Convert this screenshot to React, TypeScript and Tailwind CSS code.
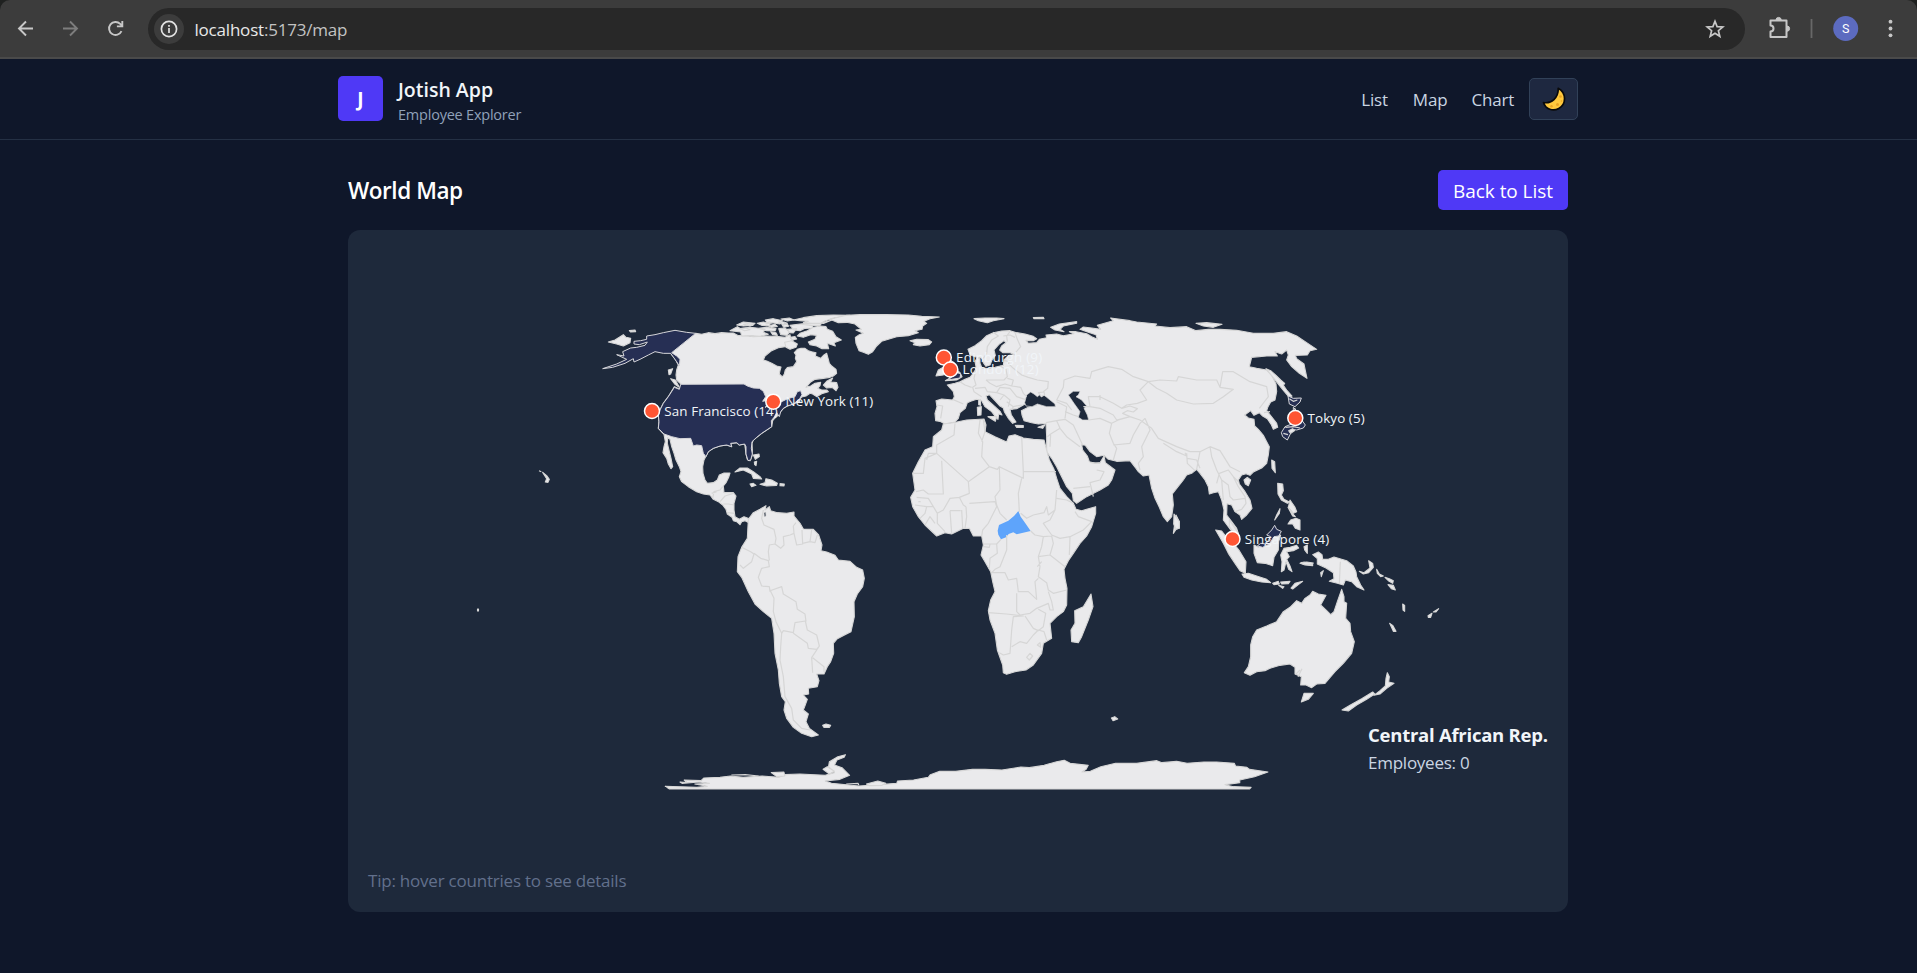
import React from "react";

type Pin = { name: string; x: number; y: number; width: number };

const pins: Pin[] = [
  { name: "San Francisco (14)", x: 652, y: 411, width: 113.5 },
  { name: "New York (11)", x: 773.3, y: 401.7, width: 87.5 },
  { name: "Edinburgh (9)", x: 943.8, y: 357.5, width: 86 },
  { name: "London (12)", x: 950.3, y: 369.5, width: 76 },
  { name: "Tokyo (5)", x: 1295.3, y: 418, width: 57 },
  { name: "Singapore (4)", x: 1232.5, y: 539, width: 84.5 },
];

/** A group of outlines that share an origin, drawn at a third of their unit size. */
function Region({ x, y, sx = 3, children }: { x: number; y: number; sx?: number; children: React.ReactNode }) {
  return <g transform={`translate(${x} ${y}) scale(${1 / sx} ${1 / 3})`}>{children}</g>;
}

const Land = ({ d }: { d: string }) => (
  <path d={d} fill="#eaeaec" stroke="#d6d6d6" strokeWidth="1.1" vectorEffect="non-scaling-stroke" strokeLinejoin="round" />
);
const Border = ({ d }: { d: string }) => (
  <path d={d} fill="none" stroke="#d6d6d6" strokeWidth="1.2" vectorEffect="non-scaling-stroke" strokeLinejoin="round" />
);
const Staffed = ({ d }: { d: string }) => (
  <path d={d} fill="#262f54" stroke="#d6d6da" strokeWidth="1" vectorEffect="non-scaling-stroke" strokeLinejoin="round" />
);
const Water = ({ d }: { d: string }) => <path d={d} fill="#1e293b" stroke="#d6d6d6" strokeWidth="0.7" vectorEffect="non-scaling-stroke" />;

function NorthAmerica() {
  return (
    <>
      <Region x={520} y={300}>
        <Land d="M527 100 545 103 565 98 585 101 605 98 625 99 640 99 655 107 680 107 700 110 740 108 775 110 795 112 810 104 812 115 820 120 802 128 806 134 795 140 775 143 755 152 745 160 735 168 730 180 740 183 755 190 770 198 783 201 780 212 778 222 787 231 793 222 796 210 802 203 820 200 830 185 826 175 828 165 823 158 832 148 843 145 855 145 865 152 875 155 888 158 886 168 902 175 912 165 920 160 925 178 928 190 935 198 948 208 950 220 940 228 930 232 910 235 885 238 872 246 858 262 872 258 885 250 902 247 900 257 893 265 905 270 920 270 925 275 905 281 890 290 878 282 870 280 858 288 845 291 838 298 840 304 820 312 802 318 790 325 782 335 775 345 765 354 758 362 755 380 740 390 725 400 710 412 700 420 696 430 697 450 696 468 690 482 682 478 678 462 676 445 674 432 658 435 650 428 632 430 635 440 620 435 600 438 580 445 565 455 558 468 552 480 548 500 549 520 555 540 562 550 580 548 592 540 598 525 612 519 630 519 626 532 618 548 610 558 612 578 640 578 648 588 642 610 642 630 645 650 658 658 672 650 688 656 690 670 675 662 665 665 660 674 650 665 640 662 636 652 622 642 618 628 608 615 595 605 580 598 570 585 550 582 530 575 505 560 485 545 478 530 483 515 478 500 468 480 462 460 455 440 450 418 443 413 442 430 448 455 453 475 458 500 453 506 445 492 440 475 429 458 432 440 436 425 432 403 415 385 417 365 415 345 420 330 430 310 445 290 463 260 480 268 483 252 470 240 468 225 470 210 475 195 470 185 462 172 452 160Z" />
        <Border d="M578 595 582 575 600 570 608 560M600 605 615 588 640 580M610 612 625 612 642 615M622 638 645 640M575 580 590 575" />
        <Staffed d="M482 253 672 252 682 258 700 264 718 265 730 274 737 290 728 304 738 302 745 315 735 322 760 310 785 305 803 296 825 290 832 275 842 272 846 284 838 298 820 312 802 318 790 325 782 335 778 350 770 338 762 352 754 362 755 380 740 390 725 400 710 412 696 425 694 445 697 462 692 480 684 482 678 462 678 440 674 432 658 435 650 428 632 430 635 440 620 435 600 438 580 445 565 455 558 470 550 460 545 437 530 435 520 438 512 415 480 416 455 410 432 402 415 385 417 365 415 345 420 330 430 310 445 290 463 262 478 268Z" />
        <Staffed d="M527 100 500 97 465 91 430 98 405 104 380 108 380 118 362 122 342 124 342 132 358 134 382 126 375 136 350 142 332 144 308 155 312 168 290 164 320 178 290 192 248 206 278 202 315 190 340 176 342 186 360 178 385 165 405 155 430 160 452 160 462 174 470 185 478 198 480 178 470 168 455 158Z" />
        <Land d="M265 126 285 120 310 104 318 112 332 115 330 128 310 138 290 132ZM328 92 345 90 347 95 332 96ZM445 210 458 206 452 222 447 224ZM452 236 466 240 478 262 464 252Z" />
        <Land d="M57 512 64 515M68 517 80 527 88 538 84 547 76 546 80 536Z" />
        <Land d="M645 516 660 504 682 504 700 515 720 530 725 537 700 535 695 522 670 510ZM690 552 700 550 708 556 695 560ZM720 553 735 548 738 536 755 540 772 550 770 556 740 558ZM780 551 793 552 792 558 780 557ZM700 465 717 462 718 470 706 478ZM703 486 710 484 708 497 704 494Z" />
      </Region>
      <Region x={700} y={300}>
        <Land d="M90 92 112 80 122 86 150 82 170 84 195 88 190 97 205 103 180 109 150 107 125 108 122 96ZM110 75 130 66 165 70 158 76 130 78ZM172 70 190 66 210 72 208 78 185 76ZM175 85 200 82 228 86 225 93 200 92ZM196 60 220 56 248 62 240 72 215 68 200 66ZM236 86 255 84 268 96 262 106 242 104ZM262 88 290 86 280 99 268 98ZM270 76 300 72 335 76 340 84 315 85 300 92 282 90ZM254 127 275 122 292 132 288 142 270 148 258 142ZM300 72 340 68 372 70 396 60 366 68 360 76 330 76Z" />
        <Land d="M130 73 145 71 160 74 150 78ZM205 77 225 73 232 79 214 82ZM247 76 262 72 266 79 252 82ZM212 95 228 98 232 106 218 104ZM243 57 268 54 282 60 262 63ZM198 72 208 66 216 69ZM270 112 285 110 290 117 278 120ZM120 86 138 84 150 89 134 92ZM236 66 252 66 262 70 246 73Z" />
        <Land d="M280 60 310 53 350 47 400 45 450 46 400 54 375 63 362 70 335 70 310 68 325 64 300 62Z" />
        <Land d="M322 92 340 82 362 78 378 80 382 88 398 94 408 110 424 120 402 128 406 138 382 130 386 146 366 146 350 138 330 134 325 126 345 118 350 106 332 104 310 112 292 108 300 100Z" />
        <Land d="M390 58 420 50 440 46 480 44 560 44 625 45 665 49 718 51 690 56 672 64 680 70 668 78 666 88 645 92 655 98 625 107 590 110 565 118 545 124 530 138 518 155 505 163 490 157 477 152 468 130 466 112 478 104 490 100 468 90 484 88 465 72 440 67 415 68Z" />
        <Land d="M370 255 380 244 398 234 392 246 410 248 414 262 408 272 396 262 380 264ZM630 122 650 118 685 119 695 126 688 134 660 138 640 134 645 128Z" />
      </Region>
    </>
  );
}

function SouthAmerica() {
  return (
    <Region x={720} y={490}>
      <Land d="M85 88 100 68 120 58 138 47 135 60 148 50 152 62 172 68 200 70 222 66 222 78 240 100 250 117 280 118 296 135 306 165 303 182 320 186 345 196 355 210 390 214 410 232 428 240 433 265 428 290 412 312 402 335 403 380 393 425 375 434 352 446 340 460 341 490 332 515 322 530 312 552 290 552 297 572 292 590 265 595 266 612 250 615 262 628 254 650 250 660 265 672 258 695 268 715 295 735 275 740 245 730 220 712 200 685 192 660 196 635 185 620 178 580 175 540 165 490 162 430 155 385 130 365 105 342 85 305 65 262 52 245 54 200 65 172 82 145Z" />
      <Land d="M308 706 318 702 332 706 328 712 312 712Z" />
      <Border d="M130 60 125 85 132 105 162 118 168 145 165 162 148 165 145 185 148 212M65 172 92 185 102 192 95 215 70 235 60 225M102 190 122 205 145 212 148 230 125 235 115 262 125 288 148 290 150 305M165 162 182 175 192 165 190 140 210 135 222 130 220 108 228 98M222 130 230 165 248 162 246 120M248 160 270 155 275 120M270 155 285 158 292 135M148 303 185 290 190 312 228 335 232 358 255 372 258 395 M150 300 162 325 160 365 168 395 185 430M185 430 190 422 220 428 225 398 256 393 262 420 290 435 298 468 290 478 265 475 262 460 220 430M298 468 275 503 278 548M278 503 312 530 312 545M185 430 182 470 180 510 190 560 195 620 215 655 220 690 245 715 270 720" />
      <Water d="M132 68 137 66 138 78 133 80Z" />
    </Region>
  );
}

function Eurasia() {
  return (
    <Region x={900} y={300}>
      <Land d="M108 302 125 297 158 300 163 290 160 275 150 264 142 255 165 250 180 245 195 238 210 232 218 222 226 210 228 200 225 185 232 172 240 178 240 190 246 204 262 206 285 202 310 196 312 180 325 167 345 164 330 158 308 158 299 150 305 138 318 128 312 122 298 132 282 150 286 166 276 180 270 195 258 199 250 188 246 175 230 172 210 164 204 148 225 137 245 122 260 107 280 98 305 93 330 92 350 98 375 102 400 109 410 116 400 122 378 121 385 130 410 128 418 118 440 113 438 105 470 102 490 107 522 101 508 95 528 95 560 101 575 110 592 118 588 104 565 97 540 88 550 81 575 84 602 88 592 76 640 62 632 54 690 62 710 66 770 72 765 78 810 83 860 80 888 92 925 88 960 88 1010 91 1060 100 1120 100 1160 95 1190 108 1220 128 1250 148 1230 152 1222 165 1186 166 1190 176 1212 192 1216 212 1221 235 1198 220 1175 200 1160 180 1165 165 1160 150 1145 162 1125 155 1132 168 1100 168 1055 172 1048 200 1070 205 1100 210 1115 226 1128 252 1130 275 1125 300 1112 306 1104 320 1100 332 1116 352 1130 370 1133 382 1120 388 1114 374 1102 356 1088 348 1078 338 1062 346 1052 332 1034 345 1045 354 1062 358 1064 378 1075 388 1090 406 1100 425 1108 440 1105 465 1100 490 1085 504 1060 516 1050 526 1038 521 1025 525 1015 540 1018 552 1035 575 1050 600 1056 625 1040 645 1025 658 1020 645 1005 635 995 615 981 611 980 645 995 665 1010 685 1017 707 1000 700 985 680 970 660 972 630 965 600 955 575 940 578 928 582 925 560 915 540 900 520 890 508 875 520 860 525 850 540 830 565 817 582 820 615 815 650 802 665 790 650 778 622 765 595 755 565 747 525 730 528 715 515 708 505 690 482 650 484 625 478 612 466 590 470 570 455 556 436 545 434 548 450 562 468 568 485 585 490 600 488 612 468 616 488 645 510 635 540 625 555 600 570 560 590 530 610 520 602 517 580 500 560 485 530 470 500 455 475 440 455 440 410 438 370 415 372 395 368 372 362 366 345 364 332 385 322 410 316 375 312 350 326 330 328 334 345 348 366 338 370 325 355 313 335 310 324 300 318 285 302 268 284 258 288 262 300 285 320 300 334 306 345 296 342 294 358 288 352 275 335 255 320 245 302 230 298 212 304 202 308 196 325 180 338 175 355 165 366 135 372 120 364 107 362 105 340 111 320Z" />
      <Water d="M380 285 392 276 402 282 412 290 425 280 440 292 465 312 466 320 440 320 412 312 396 320 378 318 374 308Z" />
      <Land d="M415 278 432 276 434 284 424 290Z" />
      <Water d="M505 285 520 274 540 274 535 285 528 290 545 300 560 318 552 325 562 345 566 360 548 360 535 352 540 335 522 310Z" />
      <Land d="M232 322 244 320 243 345 233 346ZM236 302 241 298 242 316 236 314ZM264 350 290 350 286 364ZM346 376 370 377 370 382 350 382ZM414 382 435 374 428 385ZM108 228 115 210 130 202 138 212 130 225ZM135 188 150 180 162 188 165 205 180 218 186 230 170 240 136 242 150 234 140 220 148 205Z" />
      <Staffed d="M142 240 155 232 148 220 165 215 182 222 180 234Z" />
      <Land d="M222 56 255 54 290 54 312 56 280 62 262 68 235 62ZM400 53 430 52 432 56 402 56ZM452 82 478 72 530 65 530 70 490 78 480 88 492 95 465 90ZM820 700 828 645 838 665 838 685 828 688ZM888 70 920 68 966 73 940 82 910 78Z" />
      <Border d="M280 97 295 108 275 120 262 140 260 160 250 175M330 95 320 108 322 125M345 98 352 118 362 140 345 160M310 108 330 105 345 112M326 168 325 190 340 205 365 225 385 232 412 240 445 245 443 265 430 275M312 182 330 185M300 198 318 208 322 230 312 240 290 240 258 240M228 208 222 235 228 255 218 262 222 275 245 290M258 240 270 250 290 260 315 252 335 258 340 240 322 235M225 265 255 262 262 275 290 278 300 262M290 278 312 285 330 300 325 320M335 258 362 262 370 280 380 290M300 262 330 265 350 290 375 298M312 285 300 300M320 305 340 320 365 315M340 320 335 330M110 315 128 318 122 355M158 298 190 312M180 245 195 255 215 262" />
      <Border d="M490 262 492 240 525 228 570 235 575 215 625 200 665 208 700 230 745 245 720 270 740 300 712 310 680 315 665 325 640 310 600 290 565 290 570 320 550 320M600 300 600 285M570 320 600 325 640 345 650 360 690 350 720 360M745 245 770 265 800 280 830 300 880 312 940 310 970 290 1000 268 960 262 950 240 890 240 835 230 830 243 780 240 745 245M960 262 968 215 1000 215 1050 245 1100 260 1105 290 1088 312 1078 325M1092 338 1110 335M490 262 470 300 500 310 515 330M470 305 500 320 495 355M438 368 470 362 495 358 520 375 548 435M470 362 480 385 452 402 442 410M480 385 500 410 540 440M452 402 450 440M495 335 520 345 535 350M566 360 600 355 635 370 655 360 690 350M635 370 628 400 640 430 650 445 640 480M640 435 690 430 700 405 720 370 735 355M735 355 750 390 740 410 725 440 730 470 715 490 720 510M720 360 755 385 775 415 830 440 870 455 900 455 930 440 960 452 990 500 1020 515M790 430 830 455 860 468 855 458M860 460 862 490 885 512M862 475 890 480 900 505M900 455 895 480 890 508M930 440 935 470 950 510 965 540 970 600M950 550 958 520 985 510 1000 530 1015 560 1035 590 1038 610 1025 628 1005 635M965 540 985 555 990 590 1000 600 1035 595M1000 530 1015 545M580 590 570 548 600 540 612 515 590 510M520 565 570 560M572 488 600 490M665 325 690 318 712 326 700 336 682 332 668 340 690 350" />
      <Land d="M1115 480 1124 485 1126 518 1116 505ZM1032 540 1042 532 1052 540 1045 557 1036 552Z" />
      <Land d="M1098 206 1112 212 1128 226 1142 240 1154 250 1150 256 1160 270 1176 288 1168 292 1154 276 1138 256 1122 236Z" />
      <Staffed d="M1164 288 1180 295 1204 294 1200 306 1185 320 1168 312ZM1180 322 1192 335 1198 350 1216 375 1210 384 1190 390 1175 388 1168 395 1172 400 1162 420 1148 410 1144 398 1155 380 1175 372 1180 350Z" />
      <Land d="M1166 392 1178 386 1184 392 1172 400Z" />
      <Border d="M1168 296 1180 304 1192 300M1156 382 1180 380 1200 384M1150 400 1164 404M1184 324 1190 348" />
    </Region>
  );
}

function Africa() {
  return (
    <Region x={900} y={410}>
      <Land d="M130 42 160 38 200 30 252 27 258 45 255 65 285 80 320 96 327 78 345 74 370 84 400 88 432 90 440 120 448 150 462 178 470 205 480 235 500 260 520 280 528 298 545 302 587 290 587 310 575 350 560 378 540 400 520 430 505 452 492 478 495 505 501 535 500 585 490 605 470 620 450 640 455 685 430 700 425 730 400 765 378 780 345 785 320 793 310 788 308 765 292 720 285 670 270 630 265 602 272 570 285 545 278 515 272 485 255 455 243 435 250 405 245 378 220 378 208 355 190 355 155 372 135 368 110 378 75 345 55 320 38 290 32 262 45 240 38 190 55 155 75 120 98 110 100 80 125 60Z" />
      <Land d="M573 552 579 590 565 630 545 680 535 698 515 695 513 660 525 640 524 602 550 590Z" />
      <path d="M355 303 362 320 375 338 392 363 350 373 340 367 326 372 318 382 303 388 295 374 293 362 297 345 325 332 342 318Z" fill="#5ea4fb" />
      <Border d="M165 40 162 75 110 105 110 130 205 215 268 170 245 140 248 95 235 70 240 30M250 30 255 65 245 95M268 170 292 178 298 170 370 205 370 185 365 80M370 185 468 185M298 170 300 240 285 260 290 285 300 310 320 330M365 205 355 250 358 305M110 130 75 145 70 190 40 190M110 130 85 130 80 150M125 152 130 252 85 252 70 240 48 245M205 215 208 250 178 262 150 265 130 300 112 310M178 262 190 285 198 290M208 280 285 275 290 290 265 340 248 360 245 378M198 290 200 320 195 355M185 300 188 355M150 302 182 302M150 302 155 370M50 262 85 265 100 290 112 310 112 340 135 365M55 275 62 275M45 285 80 290 75 310 60 325M80 290 100 290M75 345 90 320 105 340M362 310 380 325 400 315 432 308 440 290 445 315 465 300 470 240M470 265 500 270 520 280M465 300 450 330 430 340 455 375 480 385 510 380 550 360 575 335 535 320 525 305M392 363 405 375 430 380 455 378 460 400 450 435 495 470M510 382 508 435M430 380 425 410 415 440 450 435M415 440 420 470 415 500 440 518 445 540 460 550 500 540M425 455 412 470M320 375 320 420 300 470 285 478 275 488 315 488 325 510 350 505 355 545 385 545 410 568 405 515 415 505M303 388 290 402 250 402M250 410 268 412 270 402 290 402 292 430 270 445 268 475M350 550 350 605 360 615 390 610 410 595 445 580 450 600 460 600 455 575 445 545M265 608 320 612 370 618 340 620 335 660 330 730 310 735 298 728M335 710 360 695 380 700 400 675 415 660 432 665 440 690M375 618 400 655 415 662 430 650 437 610 415 598M380 742 390 730 398 738 388 750ZM412 705 420 698 422 712Z" />
    </Region>
  );
}

function Oceania() {
  return (
    <>
      <Region x={1120} y={420}>
        <Land d="M287 330 305 333 318 350 340 370 358 392 378 425 376 460 360 452 345 430 325 400 310 370ZM366 462 385 460 410 468 440 478 452 488 425 486 395 480 372 472ZM458 490 475 484 478 492 462 494ZM482 486 510 484 505 491 485 492ZM476 496 492 500 488 505ZM513 504 525 490 548 484 535 494 518 507Z" />
        <Land d="M402 375 415 382 440 372 455 350 482 345 476 365 475 390 462 412 458 437 435 430 412 428 402 400Z" />
        <Staffed d="M412 378 422 370 438 372 452 350 440 345 455 330 464 316 470 328 484 334 476 348 462 350 448 372 428 382Z" />
        <Land d="M484 455 486 425 482 405 492 385 510 382 530 376 536 384 520 392 500 395 508 410 500 418 510 438 516 455 506 448 498 425 492 450ZM552 380 562 375 562 400 554 390ZM540 430 552 427 578 432 578 437 555 435Z" />
        <Land d="M473 190 488 192 490 212 484 225 492 238 508 246 502 250 484 240 474 222ZM510 240 525 262 530 275 520 280 505 262ZM480 266 478 280 464 300 470 285ZM504 262 512 275 526 290 518 288ZM504 312 512 300 528 295 540 300 540 330 526 325 518 312ZM162 282 178 305 178 324 168 328 161 312Z" />
        <Land d="M328 300 352 335 358 348 345 345 328 320Z" />
      </Region>
      <Region x={1200} y={530}>
        <Land d="M338 74 355 66 366 74 368 88 385 88 402 81 440 92 460 108 468 126 470 140 482 165 492 180 470 170 455 155 436 150 430 165 412 160 388 154 402 146 400 128 378 114 352 102 352 86ZM362 128 370 122 364 140ZM478 124 492 128 510 114 506 92 518 100 520 112 506 128 490 132ZM530 118 538 132 550 138 542 140 532 130ZM555 142 568 146 580 152 578 160 565 152ZM564 164 580 166 586 180 574 176ZM608 222 614 226 614 244 609 240ZM684 257 696 250 692 262 685 262ZM700 246 716 236 708 246ZM569 280 578 286 588 304 580 304ZM303 98 320 96 340 99 335 103 310 102Z" />
        <Border d="M421 95 418 162" />
        <Land d="M425 178 432 200 432 215 440 220 437 265 450 280 452 305 463 335 455 370 430 400 405 425 375 460 350 462 335 473 318 465 302 465 304 440 285 432 285 412 270 402 240 406 210 415 195 422 170 425 150 436 133 428 145 410 152 380 152 345 158 320 170 300 200 288 230 275 250 245 270 232 290 212 305 220 315 205 330 195 338 184 355 192 378 196 362 225 380 242 392 254 402 245 412 215ZM304 516 312 490 340 490 325 508ZM562 428 568 440 566 456 582 460 560 475 540 492 522 496 540 482 556 468 558 445ZM426 540 450 526 485 506 518 486 524 492 500 508 470 525 445 543Z" />
        <Border d="M288 432 300 420M294 440 306 416" />
      </Region>
      <Land d="M477.500 609h1v2h-1z" />
    </>
  );
}

function Antarctica() {
  return (
    <Region x={640} y={700} sx={2.376}>
      <Land d="M60 259 135 262 160 259 130 252 165 250 140 246 100 250 95 246 112 248 105 240 145 242 152 234 190 232 215 228 245 232 290 228 330 232 345 224 380 222 440 226 462 218 448 200 450 185 470 170 488 164 485 172 468 180 462 195 480 203 498 226 475 238 440 243 455 250 520 258 570 254 610 250 612 243 650 240 685 232 690 224 712 214 750 214 790 208 820 208 860 210 905 201 925 203 960 196 990 185 1008 181 1022 190 1065 196 1060 208 1050 216 1070 214 1095 200 1130 190 1180 190 1228 182 1240 188 1275 184 1300 190 1340 186 1370 186 1412 190 1415 198 1442 202 1448 208 1492 216 1460 230 1425 240 1425 248 1390 254 1410 260 1452 262 1448 267 70 267Z" />
      <Land d="M435 208 445 200 462 214 450 222ZM312 218 342 216 344 228 325 230ZM538 252 565 243 584 250 575 256 545 257ZM1120 54 1128 50 1135 57 1124 62Z" />
      <Border d="M217 225 250 224 282 228M490 252 518 250 520 256" />
    </Region>
  );
}

function WorldMap() {
  return (
    <svg className="block h-full w-full" viewBox="348 230 1220 682" aria-label="World map">
      <NorthAmerica />
      <SouthAmerica />
      <Eurasia />
      <Africa />
      <Oceania />
      <Antarctica />
      {pins.map((p) => (
        <g key={p.name}>
          <circle cx={p.x} cy={p.y} r="7.5" fill="#ff5533" stroke="#fff" strokeWidth="1.5" />
          <text x={p.x + 12.3} y={p.y + 4.5} textLength={p.width} fontSize="13.4" fill="#f1f5f9" className="font-['Open_Sans',sans-serif]">
            {p.name}
          </text>
        </g>
      ))}
    </svg>
  );
}

const icon = { fill: "none", stroke: "#c7c7c7", strokeWidth: 1.9 } as const;

function BrowserBar() {
  return (
    <div className="bg-[#1f2120]">
      <div className="flex h-[59px] items-center rounded-t-[10px] border-b-2 border-[#4a4a4a] bg-[#3c3c3c]">
        <svg width="148" height="57" viewBox="0 0 148 57">
          <path {...icon} d="M33 28.5H19.5M26 21.5l-7 7 7 7" />
          <path {...icon} stroke="#7d7d7d" d="M63 28.5h13.500M70 21.500l7 7-7 7" />
          <path {...icon} d="M121.500 31.200a6.500 6.500 0 1 1-1.300-7.300l2 2M122.300 21v5.400h-5.400" />
        </svg>
        <div className="flex h-[42px] flex-1 items-center rounded-full bg-[#282828] pr-5 pl-1.5">
          <div className="flex size-[30px] items-center justify-center rounded-full bg-[#3c3c3c]">
            <svg width="18" height="18" viewBox="0 0 18 18">
              <circle cx="9" cy="9" r="7.600" fill="none" stroke="#e3e3e3" strokeWidth="1.700" />
              <path d="M9 8v5M9 5v1.700" stroke="#e3e3e3" strokeWidth="1.700" />
            </svg>
          </div>
          <p className="mt-0.5 ml-[10.500px] flex-1 font-['Open_Sans',sans-serif] text-[17px] tracking-[-0.2px] text-[#c3c3c3]">
            <span className="text-[#e8e8e8]">localhost</span>:5173/map
          </p>
          <svg width="20" height="20" viewBox="0 0 20 20">
            <path {...icon} strokeWidth="1.700" d="M10 2.300l2.100 5.300 5.700.4-4.400 3.700 1.400 5.600L10 14.200l-4.800 3.100 1.400-5.600L2.200 8l5.700-.4z" />
          </svg>
        </div>
        <svg width="172" height="57" viewBox="0 0 172 57">
          <path {...icon} strokeWidth="2" strokeLinejoin="round" d="M25.500 20.500h16v16.500h-16v-5.500a3 3 0 0 0 0-6z" />
          <path d="M31 20a2.600 2.600 0 0 1 5.200 0zM42 26a2.600 2.600 0 0 1 0 5.200z" fill="#c7c7c7" stroke="#c7c7c7" />
          <path d="M66.500 19v19" stroke="#686868" strokeWidth="1.800" />
          <circle cx="100.700" cy="28.500" r="12.500" fill="#5c6bc0" />
          <text x="100.700" y="33" textAnchor="middle" fontSize="12.500" fill="#fff" className="font-[Roboto,sans-serif]">
            S
          </text>
          <g fill="#c7c7c7">
            <circle cx="145.500" cy="21.700" r="1.900" />
            <circle cx="145.500" cy="28.500" r="1.900" />
            <circle cx="145.500" cy="35.300" r="1.900" />
          </g>
        </svg>
      </div>
    </div>
  );
}

function Moon() {
  return (
    <svg width="24" height="24" viewBox="0 0 24 24">
      <path
        d="M16.200 1.300c8.400 4.700 8.300 16 .6 20.200C11.200 24.500 3.500 22.600 1.500 15.500c7.700 1.500 15.200-4.700 14.700-14.200Z"
        fill="#ffc83d"
        stroke="#0a0a0a"
        strokeWidth="1.700"
        strokeLinejoin="round"
      />
      <g fill="#e8a325">
        <circle cx="18.500" cy="9.500" r="1.300" />
        <circle cx="15.500" cy="17.500" r="1.500" />
        <circle cx="9.500" cy="19.300" r="1.200" />
        <circle cx="19.500" cy="14" r=".8" />
      </g>
    </svg>
  );
}

function Header() {
  return (
    <header className="h-[81px] border-b border-[#243044] pr-px">
      <div className="mx-auto flex h-[79px] w-[1240px] items-center justify-between">
        <div className="flex items-center gap-[15px]">
          <div className="flex size-[45px] items-center justify-center rounded-[5px] bg-[#4f39f6] pt-px text-[19px] font-bold">J</div>
          <div className="pt-[6px]">
            <p className="text-[19.500px] leading-[26px] font-semibold text-slate-100">Jotish App</p>
            <p className="text-[14.500px] leading-[23px] tracking-[-0.22px] text-slate-400">Employee Explorer</p>
          </div>
        </div>
        <nav className="flex items-center text-[17px] tracking-[-0.2px] text-slate-300">
          <a className="mt-0.5 mr-[25px]">List</a>
          <a className="mt-0.5 mr-[24px]">Map</a>
          <a className="mt-0.5 mr-[15px]">Chart</a>
          <button className="flex h-[42px] w-[49px] items-center justify-center rounded-[5px] border border-slate-700 bg-[#1e2840]">
            <Moon />
          </button>
        </nav>
      </div>
    </header>
  );
}

export default function App() {
  return (
    <div className="h-[973px] w-full overflow-hidden bg-[#0f172a] font-['Open_Sans',sans-serif] text-white">
      <BrowserBar />
      <Header />
      <div className="pr-px">
        <main className="mx-auto w-[1220px] pt-[30px]">
          <div className="flex h-10 items-center justify-between">
            <h1 className="pt-px text-[22.500px] font-semibold tracking-[-0.45px]">World Map</h1>
            <button className="flex h-10 w-[130px] items-center justify-center rounded-[5px] bg-[#4f39f6] pt-0.5 text-[19px] tracking-[-0.05px]">
              Back to List
            </button>
          </div>
          <section className="relative mt-5 h-[682px] overflow-hidden rounded-[12px] bg-[#1e293b]">
            <WorldMap />
            <div className="absolute top-[490px] left-[1020px] whitespace-nowrap">
              <p className="text-[18.500px] leading-[30px] font-bold tracking-[-0.25px] text-slate-100">Central African Rep.</p>
              <p className="text-[17px] leading-[25px] tracking-[-0.25px] text-slate-300">Employees: 0</p>
            </div>
            <p className="absolute bottom-[19px] left-5 text-[17px] leading-[25px] tracking-[-0.22px] text-[#62708c]">
              Tip: hover countries to see details
            </p>
          </section>
        </main>
      </div>
    </div>
  );
}
